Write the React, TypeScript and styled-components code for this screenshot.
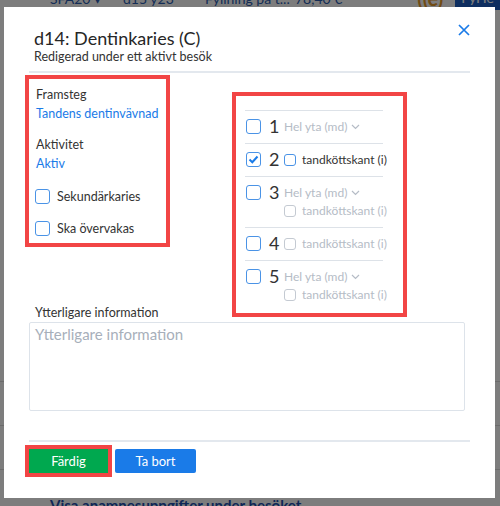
import styled, { createGlobalStyle } from 'styled-components';

const GlobalStyle = createGlobalStyle`
  html, body {
    margin: 0;
    padding: 0;
    width: 500px;
    height: 506px;
    overflow: hidden;
    font-family: Lato, 'Noto Sans', 'Liberation Sans', sans-serif;
    color: #333;
  }
  * {
    box-sizing: border-box;
  }
`;

// page behind the dialog
const Page = styled.div`
  position: relative;
  width: 500px;
  height: 506px;
  background: #fff;
  overflow: hidden;
`;

const TopBar = styled.div`
  display: flex;
  align-items: center;
  height: 20px;
  margin-top: -12px;
  padding-left: 50px;
  font-size: 14px;
  color: #2a5db0;
  white-space: nowrap;
`;

const TopItem = styled.span<{ $w: number }>`
  width: ${(p) => p.$w}px;
`;

const Logo = styled.span`
  margin-left: auto;
  margin-right: 12px;
  color: #e79a2a;
  font-weight: 700;
  font-size: 20px;
`;

const TopButton = styled.span`
  background: #1d5fc4;
  color: #fff;
  padding: 0 6px;
  height: 24px;
  line-height: 24px;
`;

const PageRows = styled.div`
  display: flex;
  flex-direction: column;
  padding-top: 330px;
`;

const PageRow = styled.div`
  height: 44px;
  border-bottom: 1px solid #ddd;
`;

const PageLink = styled.div`
  padding-left: 50px;
  margin-top: 26px;
  font-size: 15px;
  line-height: 18px;
  font-weight: 700;
  color: #1d4fb0;
  white-space: nowrap;
`;

const Backdrop = styled.div`
  position: absolute;
  inset: 0;
  background: rgba(0, 0, 0, 0.51);
`;

const Modal = styled.div`
  position: absolute;
  left: 4px;
  top: 7px;
  width: 491px;
  background: #fff;
  padding: 20px 25px 25px 25px;
  display: flex;
  flex-direction: column;
`;

const Header = styled.div`
  position: relative;
  padding-left: 5px;
  padding-bottom: 6px;
  border-bottom: 2px solid #e3e8ee;
`;

const Title = styled.h2`
  margin: 0;
  font-size: 18px;
  line-height: 22px;
  font-weight: 400;
  color: #262626;
`;

const Subtitle = styled.div`
  font-size: 12.5px;
  line-height: 16px;
  color: #333;
`;

const CloseButton = styled.button`
  position: absolute;
  right: 0;
  top: -3px;
  width: 12px;
  height: 12px;
  padding: 0;
  border: none;
  background: none;
  cursor: pointer;
  svg {
    display: block;
  }
`;

const Body = styled.div`
  display: flex;
  align-items: flex-start;
`;

// red markers around the highlighted areas
const Marked = styled.div`
  outline: 4px solid #f24545;
`;

const LeftColumn = styled(Marked)`
  width: 137px;
  margin-top: 6px;
  padding: 6px 0 4px 7px;
  display: flex;
  flex-direction: column;
`;

const Group = styled.div`
  display: flex;
  flex-direction: column;
  font-size: 12.5px;
  line-height: 19px;
  white-space: nowrap;
  & + & {
    margin-top: 12px;
  }
`;

const Link = styled.a`
  color: #1a7be8;
  text-decoration: none;
  cursor: pointer;
`;

const CheckRow = styled.label`
  display: flex;
  align-items: center;
  gap: 7px;
  height: 22px;
  margin-top: 10px;
  margin-left: -1px;
  font-size: 12.5px;
  white-space: nowrap;
  &:first-of-type {
    margin-top: 12px;
  }
`;

const Box = styled.span<{ $small?: boolean; $muted?: boolean }>`
  flex: none;
  display: inline-flex;
  align-items: center;
  justify-content: center;
  width: ${(p) => (p.$small ? '12px' : '15px')};
  height: ${(p) => (p.$small ? '12px' : '15px')};
  border: 1px solid ${(p) => (p.$muted ? '#c4cad2' : '#4a93e6')};
  border-radius: 3px;
  background: #fff;
`;

const RightColumn = styled(Marked)`
  width: 167px;
  margin-left: 70px;
  margin-top: 23px;
  margin-bottom: -8px;
  padding: 14px 0 2px 9px;
`;

const ToothList = styled.div`
  width: 138px;
  display: flex;
  flex-direction: column;
`;

const ToothRow = styled.div`
  display: flex;
  align-items: flex-start;
  border-top: 1px solid #dde2e8;
  padding: 7px 0 8px 1px;
`;

const ToothNumber = styled.span`
  width: 11px;
  margin-left: 8px;
  font-size: 18px;
  line-height: 17px;
  color: #333;
`;

const ToothMain = styled.div`
  display: flex;
  align-items: center;
  height: 17px;
`;

const Options = styled.div`
  display: flex;
  flex-direction: column;
  margin-left: 4px;
  gap: 1px;
  white-space: nowrap;
`;

const Select = styled.span`
  display: inline-flex;
  align-items: center;
  gap: 4px;
  height: 17px;
  font-size: 12px;
  color: #b5bcc6;
`;

const Edge = styled.label<{ $muted?: boolean }>`
  display: flex;
  align-items: center;
  gap: 6px;
  height: 17px;
  font-size: 12px;
  color: ${(p) => (p.$muted ? '#b5bcc6' : '#333')};
`;

const Field = styled.div`
  display: flex;
  flex-direction: column;
`;

const FieldLabel = styled.label`
  padding-left: 6px;
  font-size: 12.5px;
  line-height: 16px;
  margin-bottom: 1px;
`;

const TextArea = styled.textarea`
  width: 436px;
  height: 89px;
  resize: none;
  border: 1px solid #dde3ea;
  border-radius: 2px;
  padding: 2px 5px;
  font-family: inherit;
  font-size: 15px;
  color: #333;
  &::placeholder {
    color: #a7afba;
  }
`;

const Footer = styled.div`
  margin-top: 29px;
  border-top: 2px solid #e3e8ee;
  padding-top: 7px;
  display: flex;
  gap: 7px;
`;

const Button = styled.button<{ $variant: 'ok' | 'danger' }>`
  height: 24px;
  border: none;
  border-radius: 2px;
  color: #fff;
  font-family: inherit;
  font-size: 13px;
  cursor: pointer;
  width: ${(p) => (p.$variant === 'ok' ? '79px' : '81px')};
  background: ${(p) => (p.$variant === 'ok' ? '#00a84f' : '#1a7be8')};
`;

const DoneButton = styled(Button)`
  outline: 4px solid #f24545;
  border-radius: 0;
`;

const Check = () => (
  <svg width="11" height="9" viewBox="0 0 11 9">
    <polyline points="1.5,4.5 4.3,7.2 9.5,1.5" fill="none" stroke="#1a7be8" strokeWidth="2" />
  </svg>
);

const Chevron = () => (
  <svg width="9" height="6" viewBox="0 0 9 6">
    <polyline points="1,1 4.5,4.5 8,1" fill="none" stroke="#b5bcc6" strokeWidth="1.2" />
  </svg>
);

type Tooth = {
  n: number;
  checked?: boolean;
  select?: boolean;
  edge?: 'on' | 'muted';
};

const teeth: Tooth[] = [
  { n: 1, select: true },
  { n: 2, checked: true, edge: 'on' },
  { n: 3, select: true, edge: 'muted' },
  { n: 4, edge: 'muted' },
  { n: 5, select: true, edge: 'muted' },
];

const App = () => {
  return (
    <Page>
      <GlobalStyle />
      <TopBar>
        <TopItem $w={73}>SFA20 ▾</TopItem>
        <TopItem $w={82}>d15 y23</TopItem>
        <TopItem $w={90}>Fyllning på t...</TopItem>
        <TopItem $w={50}>78,40 €</TopItem>
        <Logo>((e)</Logo>
        <TopButton>FyHe</TopButton>
      </TopBar>
      <PageRows>
        <PageRow />
        <PageRow />
        <PageRow />
        <PageLink>Visa anamnesuppgifter under besöket</PageLink>
      </PageRows>
      <Backdrop>
        <Modal>
          <Header>
            <Title>d14: Dentinkaries (C)</Title>
            <Subtitle>Redigerad under ett aktivt besök</Subtitle>
            <CloseButton aria-label="Stäng">
              <svg width="12" height="12" viewBox="0 0 12 12">
                <path d="M1 1 L11 11 M11 1 L1 11" stroke="#1a7be8" strokeWidth="1.7" />
              </svg>
            </CloseButton>
          </Header>
          <Body>
            <LeftColumn>
              <Group>
                <span>Framsteg</span>
                <Link>Tandens dentinvävnad</Link>
              </Group>
              <Group>
                <span>Aktivitet</span>
                <Link>Aktiv</Link>
              </Group>
              <CheckRow>
                <Box />
                Sekundärkaries
              </CheckRow>
              <CheckRow>
                <Box />
                Ska övervakas
              </CheckRow>
            </LeftColumn>
            <RightColumn>
              <ToothList>
                {teeth.map((t) => (
                  <ToothRow key={t.n}>
                    <ToothMain>
                      <Box>{t.checked && <Check />}</Box>
                      <ToothNumber>{t.n}</ToothNumber>
                    </ToothMain>
                    <Options>
                      {t.select && (
                        <Select>
                          Hel yta (md) <Chevron />
                        </Select>
                      )}
                      {t.edge && (
                        <Edge $muted={t.edge === 'muted'}>
                          <Box $small $muted={t.edge === 'muted'} />
                          tandköttskant (i)
                        </Edge>
                      )}
                    </Options>
                  </ToothRow>
                ))}
              </ToothList>
            </RightColumn>
          </Body>
          <Field>
            <FieldLabel>Ytterligare information</FieldLabel>
            <TextArea placeholder="Ytterligare information" />
          </Field>
          <Footer>
            <DoneButton $variant="ok">Färdig</DoneButton>
            <Button $variant="danger">Ta bort</Button>
          </Footer>
        </Modal>
      </Backdrop>
    </Page>
  );
};

export default App;
